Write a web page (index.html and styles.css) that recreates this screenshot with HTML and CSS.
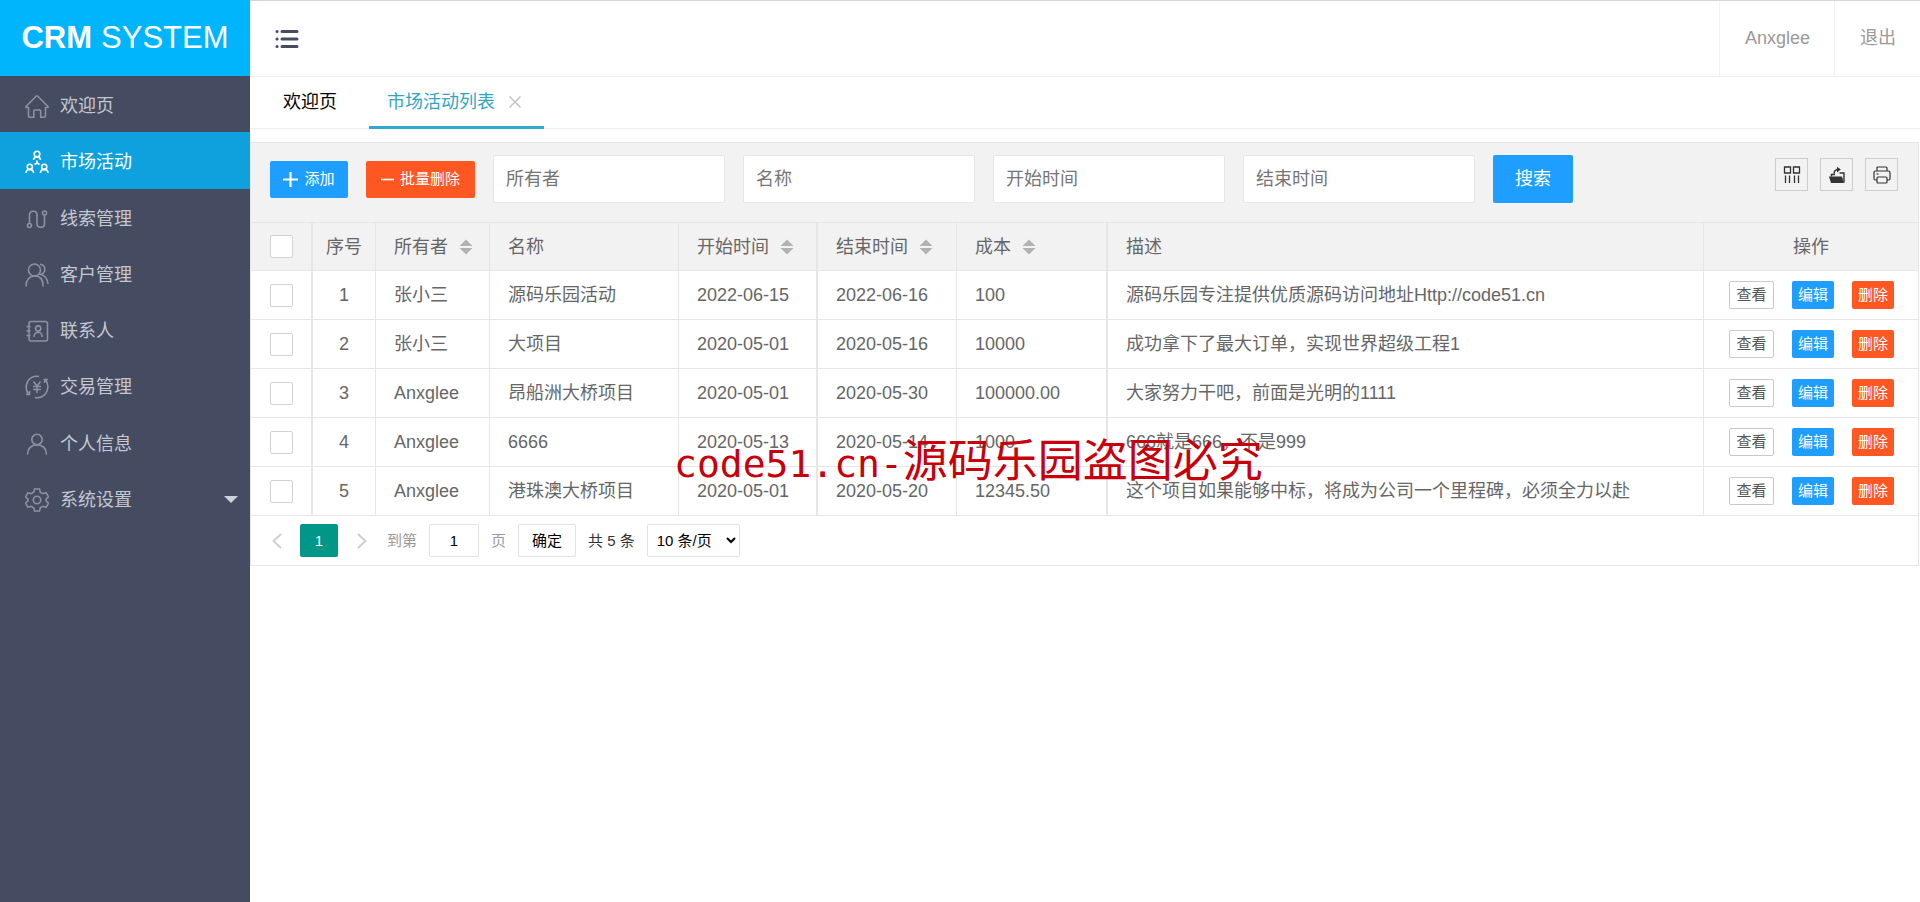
FILE: index.html
```html
<!DOCTYPE html>
<html lang="zh-CN">
<head>
<meta charset="utf-8">
<title>CRM SYSTEM</title>
<link rel="stylesheet" href="styles.css">
</head>
<body>
<svg class="sprite" aria-hidden="true">
  <symbol id="sort" viewBox="0 0 14 16"><path d="M7 .5l6.500 6.500h-13zM7 15.500l6.500-6.500h-13z" fill="#b2b2b2"/></symbol>
</svg>
<div class="app">
  <aside class="sidebar">
    <div class="logo"><b>CRM</b> SYSTEM</div>
    <nav class="menu">
      <a class="menu-item" href="#"><svg class="menu-icon" viewBox="0 0 24 24"><path d="M1 12.500L11.200 2.200q.8-.8 1.600 0L23 12.500v1h-2.500V22q0 1.200-1.200 1.200h-3.600V17q0-1-1-1H9.800q-1 0-1 1v6.200H4.700q-1.200 0-1.200-1.200v-8.500H1z"/></svg>欢迎页</a>
      <a class="menu-item active" href="#"><svg class="menu-icon" viewBox="0 0 24 24"><circle cx="12" cy="4" r="2.800"/><path d="M8.500 10q.3-3 3.500-3.200 3.200.2 3.500 3.200M12 10.500V14M12 13l-2.500 1.500M12 13l2.500 1.500"/><circle cx="4.800" cy="16.800" r="2.600"/><circle cx="19.200" cy="16.800" r="2.600"/><path d="M1 23q.2-3.500 3.800-3.600Q8.400 19.500 8.600 23M15.400 23q.2-3.500 3.800-3.600 3.600.1 3.800 3.600"/></svg>市场活动</a>
      <a class="menu-item" href="#"><svg class="menu-icon" viewBox="0 0 24 24"><circle cx="4.500" cy="18.500" r="2"/><circle cx="19.500" cy="6" r="2"/><path d="M4.500 16.500V8q0-3.800 3.800-3.800T12 8v8.500q0 3.800 3.800 3.800t3.700-3.800V8"/></svg>线索管理</a>
      <a class="menu-item" href="#"><svg class="menu-icon" viewBox="0 0 24 24"><circle cx="9.500" cy="7" r="6"/><path d="M1 23.500Q1 13.500 9.500 13T18 23.500M15 1.300q4.800.4 4.800 5 0 3.700-3.800 5.200 6.500 2 7 9.500"/></svg>客户管理</a>
      <a class="menu-item" href="#"><svg class="menu-icon" viewBox="0 0 24 24"><rect x="4" y="2.500" width="18.500" height="19.500" rx="2"/><path d="M1.500 7.500h4M1.500 12h4M1.500 16.500h4M9 18q.3-4.500 4.200-4.700Q17 13.500 17.300 18"/><circle cx="13.200" cy="9.500" r="2.600"/></svg>联系人</a>
      <a class="menu-item" href="#"><svg class="menu-icon" viewBox="0 0 24 24"><path d="M14 1.500Q7 .2 3 6-.8 12.500 3.200 18.800M1 19.500h3.500V16M10 22.500q7 1.200 11-4.500 3.800-6.500-.2-12.800M23 4.500h-3.500V8M8.500 6.500l3.500 4.500 3.500-4.500M12 11v7M8 11.500h8M8 14.500h8"/></svg>交易管理</a>
      <a class="menu-item" href="#"><svg class="menu-icon" viewBox="0 0 24 24"><circle cx="12" cy="7.500" r="5.200"/><path d="M2.500 22.500q.5-9.500 9.500-9.800 9 .3 9.500 9.800"/></svg>个人信息</a>
      <a class="menu-item" href="#"><svg class="menu-icon" viewBox="0 0 24 24"><circle cx="12" cy="12" r="3.700"/><path d="M9.500 1h5l.8 3.200 2.600 1.500 3.200-1 2.400 4.200-2.400 2.300v1.600l2.400 2.300-2.400 4.200-3.200-1-2.600 1.500-.8 3.200h-5l-.8-3.200-2.600-1.500-3.200 1L.5 15.100l2.400-2.300v-1.600L.5 8.900l2.400-4.200 3.200 1 2.600-1.500z"/></svg>系统设置<span class="caret"></span></a>
    </nav>
  </aside>

  <div class="main">
    <header class="header">
      <button class="toggle" aria-label="菜单"><svg width="24" height="20" viewBox="0 0 24 20"><path d="M7 2.500h15M7 10h15M7 17.500h15" stroke="#454c62" stroke-width="3" stroke-linecap="round"/><path d="M2 2.500h.1M2 10h.1M2 17.500h.1" stroke="#454c62" stroke-width="3" stroke-linecap="round"/></svg></button>
      <div class="user">
        <a href="#">Anxglee</a>
        <a href="#">退出</a>
      </div>
    </header>

    <div class="tabs">
      <a class="tab" href="#">欢迎页</a>
      <a class="tab current" href="#">市场活动列表<svg width="12" height="12" viewBox="0 0 12 12"><path d="M.5.5l11 11M11.500.5l-11 11" stroke="#c2c2c2" stroke-width="1.500"/></svg></a>
    </div>

    <section class="panel">
      <form class="toolbar">
        <button type="button" class="btn blue add"><svg width="15" height="15" viewBox="0 0 15 15"><path d="M7.500 0v15M0 7.500h15" stroke="#fff" stroke-width="2.200"/></svg>添加</button>
        <button type="button" class="btn red batch"><svg width="13" height="15" viewBox="0 0 13 15"><path d="M0 7.500h13" stroke="#fff" stroke-width="1.600"/></svg>批量删除</button>
        <input class="field" type="text" placeholder="所有者" aria-label="所有者">
        <input class="field" type="text" placeholder="名称" aria-label="名称">
        <input class="field" type="text" placeholder="开始时间" aria-label="开始时间">
        <input class="field" type="text" placeholder="结束时间" aria-label="结束时间">
        <button type="button" class="btn blue search">搜索</button>
        <div class="tools">
          <button type="button" class="tool" aria-label="筛选列"><svg width="18" height="18" viewBox="0 0 18 18" fill="none" stroke="#333" stroke-width="1.300"><path d="M1.500 1h6v6h-6zM10.500 1h6v6h-6zM2.500 9.500V17M6.500 9.500V17M11.500 9.500V17M15.500 9.500V17"/></svg></button>
          <button type="button" class="tool" aria-label="导出"><svg width="18" height="18" viewBox="0 0 18 18"><path d="M1 10.500h13l2 6.500H3z" fill="#333"/><path d="M11.500 7H16v9.500M3.500 10.500V8.500H7M6 7.500Q6.500 3.500 10 3.500" fill="none" stroke="#333" stroke-width="1.400"/><path d="M9 .8L12.800 3.600 9 6.400z" fill="#333"/></svg></button>
          <button type="button" class="tool" aria-label="打印"><svg width="18" height="18" viewBox="0 0 18 18" fill="none" stroke="#333" stroke-width="1.200"><path d="M4 5V2q0-1 1-1h8q1 0 1 1v3M4 14H2.200Q1 14 1 12.800V6.500Q1 5 2.500 5h13Q17 5 17 6.500v6.300q0 1.200-1.200 1.200H14"/><rect x="4" y="11" width="10" height="6" rx="1"/><path d="M3.500 8h2"/></svg></button>
        </div>
      </form>

      <table class="grid">
        <colgroup><col class="c-check"><col class="c-no"><col class="c-owner"><col class="c-name"><col class="c-date"><col class="c-date"><col class="c-cost"><col><col class="c-ops"></colgroup>
        <thead>
          <tr>
            <th><input type="checkbox" aria-label="全选"></th>
            <th class="center">序号</th>
            <th>所有者<svg class="sort"><use href="#sort"/></svg></th>
            <th>名称</th>
            <th>开始时间<svg class="sort"><use href="#sort"/></svg></th>
            <th>结束时间<svg class="sort"><use href="#sort"/></svg></th>
            <th>成本<svg class="sort"><use href="#sort"/></svg></th>
            <th>描述</th>
            <th class="center">操作</th>
          </tr>
        </thead>
        <tbody>
          <tr><td><input type="checkbox" aria-label="选择 1"></td><td class="center">1</td><td>张小三</td><td>源码乐园活动</td><td>2022-06-15</td><td>2022-06-16</td><td>100</td><td>源码乐园专注提供优质源码访问地址Http://code51.cn</td><td><div class="ops"><button class="mini view">查看</button><button class="mini blue">编辑</button><button class="mini red">删除</button></div></td></tr>
          <tr><td><input type="checkbox" aria-label="选择 2"></td><td class="center">2</td><td>张小三</td><td>大项目</td><td>2020-05-01</td><td>2020-05-16</td><td>10000</td><td>成功拿下了最大订单，实现世界超级工程1</td><td><div class="ops"><button class="mini view">查看</button><button class="mini blue">编辑</button><button class="mini red">删除</button></div></td></tr>
          <tr><td><input type="checkbox" aria-label="选择 3"></td><td class="center">3</td><td>Anxglee</td><td>昂船洲大桥项目</td><td>2020-05-01</td><td>2020-05-30</td><td>100000.00</td><td>大家努力干吧，前面是光明的1111</td><td><div class="ops"><button class="mini view">查看</button><button class="mini blue">编辑</button><button class="mini red">删除</button></div></td></tr>
          <tr><td><input type="checkbox" aria-label="选择 4"></td><td class="center">4</td><td>Anxglee</td><td>6666</td><td>2020-05-13</td><td>2020-05-14</td><td>1000</td><td>666就是666，不是999</td><td><div class="ops"><button class="mini view">查看</button><button class="mini blue">编辑</button><button class="mini red">删除</button></div></td></tr>
          <tr><td><input type="checkbox" aria-label="选择 5"></td><td class="center">5</td><td>Anxglee</td><td>港珠澳大桥项目</td><td>2020-05-01</td><td>2020-05-20</td><td>12345.50</td><td>这个项目如果能够中标，将成为公司一个里程碑，必须全力以赴</td><td><div class="ops"><button class="mini view">查看</button><button class="mini blue">编辑</button><button class="mini red">删除</button></div></td></tr>
        </tbody>
      </table>

      <div class="pager">
        <button class="arrow" aria-label="上一页"><svg width="10" height="16" viewBox="0 0 10 16"><path d="M9 1L1.500 8 9 15" fill="none" stroke="#ccc" stroke-width="1.800"/></svg></button>
        <button class="page">1</button>
        <button class="arrow" aria-label="下一页"><svg width="10" height="16" viewBox="0 0 10 16"><path d="M1 1l7.500 7L1 15" fill="none" stroke="#ccc" stroke-width="1.800"/></svg></button>
        <label class="jump">到第<input type="text" value="1">页</label>
        <button class="confirm">确定</button>
        <span class="total">共 5 条</span>
        <select class="limit" aria-label="每页条数"><option>10 条/页</option></select>
      </div>
    </section>
    <div class="watermark">code51.cn-<span class="watermark-cjk">源码乐园盗图必究</span></div>
  </div>
</div>
</body>
</html>
```
FILE: styles.css
```css
* { box-sizing: border-box; }

body {
  margin: 0;
  color: #666;
  background: #fff;
  font-family: "Liberation Sans", "Noto Sans CJK SC", sans-serif;
  font-size: 18px;
  line-height: 24px;
}

a { color: inherit; text-decoration: none; }
button, input, select { font: inherit; color: inherit; }
button { padding: 0; border: 0; background: none; cursor: pointer; }
.sprite { display: none; }

.app {
  display: grid;
  grid-template-columns: 250px 1fr;
  min-height: 100vh;
}

/* Sidebar */
.sidebar { background: #454c62; }
.logo {
  display: flex;
  align-items: center;
  justify-content: center;
  gap: 9px;
  height: 76px;
  color: #fff;
  background: #01b5fd;
  font-size: 31px;
}
.menu {
  display: grid;
  grid-auto-rows: 1fr;
  min-height: 450px;
}
.menu-item {
  display: flex;
  align-items: center;
  gap: 11px;
  padding: 4px 12px 0 25px;
  color: #c4c8d2;
}
.menu-item.active { color: #fff; background: #0fa1dd; }
.menu-icon {
  width: 24px;
  height: 24px;
  fill: none;
  stroke: #8b92a2;
  stroke-width: 1.6;
}
.active .menu-icon { stroke: #fff; }
.caret {
  margin-left: auto;
  border: 7px solid transparent;
  border-top-color: #cdd1da;
  border-bottom: 0;
}

/* Header */
.main { position: relative; min-width: 0; }
.header {
  display: flex;
  justify-content: space-between;
  height: 77px;
  border-top: 1px solid #d5d5d5;
  border-bottom: 1px solid #eee;
}
.toggle { display: flex; align-items: center; padding-left: 25px; }
.user { display: flex; color: #999; }
.user a {
  display: flex;
  align-items: center;
  padding: 0 24px 2px 25px;
  border-left: 1px solid #f2f2f2;
}

/* Tabs */
.tabs {
  display: flex;
  height: 52px;
  padding-left: 15px;
  border-bottom: 1px solid #eee;
}
.tab {
  display: flex;
  align-items: center;
  gap: 14px;
  padding: 0 18px 2px;
  color: #000;
}
.tab.current {
  margin: 0 0 -1px 14px;
  padding: 3px 23px 2px 18px;
  border-bottom: 3px solid #30a9cf;
  color: #30a5c5;
}

/* Panel */
.panel {
  margin: 13px 1px 0 0;
  border: 1px solid #e6e6e6;
}
.toolbar {
  display: flex;
  align-items: center;
  gap: 18px;
  padding: 12px 20px 19px 19px;
  background: #f2f2f2;
  border-bottom: 1px solid #e6e6e6;
}
.blue { background: #1e9fff; color: #fff; }
.red { background: #ff5722; color: #fff; }
.btn {
  display: flex;
  align-items: center;
  justify-content: center;
  gap: 6px;
  height: 37px;
  border-radius: 2px;
  font-size: 15px;
}
.add { width: 78px; }
.batch { width: 109px; }
.search { width: 80px; height: 48px; font-size: 18px; }
.field {
  width: 232px;
  height: 48px;
  padding: 0 12px;
  border: 1px solid #e6e6e6;
  border-radius: 2px;
  background: #fff;
}
.field::placeholder { color: #757575; }
.tools {
  display: flex;
  align-self: flex-start;
  gap: 12px;
  margin: 3px 0 0 auto;
}
.tool {
  display: grid;
  place-items: center;
  width: 33px;
  height: 33px;
  border: 1px solid #ccc;
}

/* Table */
.grid {
  width: 100%;
  border-spacing: 0;
  table-layout: fixed;
}
.c-check { width: 62px; }
.c-no { width: 63px; }
.c-owner { width: 114px; }
.c-name { width: 189px; }
.c-date { width: 139px; }
.c-cost { width: 151px; }
.c-ops { width: 214px; }
.grid th, .grid td {
  height: 49px;
  padding: 0 18px;
  border: solid #e6e6e6;
  border-width: 0 1px 1px 0;
  font-weight: inherit;
  text-align: left;
  white-space: nowrap;
}
.grid th { height: 48px; background: #f2f2f2; }
.grid :is(th, td):is(:nth-child(1), :nth-child(5), :nth-child(7)) { border-right-width: 2px; }
.grid :is(th, td):first-child { padding-left: 19px; }
.grid :is(th, td):last-child { border-right: 0; }
.grid .center { padding: 0; text-align: center; }
.grid input {
  display: block;
  appearance: none;
  width: 23px;
  height: 23px;
  margin: 0;
  border: 1px solid #d2d2d2;
  border-radius: 2px;
  background: #fff;
}
.sort { width: 14px; height: 16px; margin-left: 11px; vertical-align: -2px; }
.ops { display: flex; gap: 18px; padding-left: 7px; }
.mini {
  width: 42px;
  height: 28px;
  border-radius: 2px;
  font-size: 15px;
}
.view { width: 45px; border: 1px solid #c9c9c9; background: #fff; color: #555; }

/* Pager */
.pager {
  display: flex;
  align-items: center;
  height: 49px;
  padding-left: 21px;
  gap: 12px;
  color: #333;
  font-size: 15px;
}
.arrow { display: flex; }
.page {
  width: 38px;
  height: 33px;
  margin: 0 7px 0 6px;
  border-radius: 2px;
  color: #fff;
  background: #009688;
}
.jump {
  display: flex;
  align-items: center;
  gap: 12px;
  padding-left: 8px;
  color: #999;
}
.jump input {
  width: 50px;
  height: 33px;
  border: 1px solid #e2e2e2;
  border-radius: 2px;
  color: #000;
  text-align: center;
}
.confirm {
  width: 58px;
  height: 33px;
  border: 1px solid #e2e2e2;
  border-radius: 2px;
  color: #000;
}
.limit {
  width: 93px;
  height: 33px;
  padding: 0 5px;
  border: 1px solid #e2e2e2;
  border-radius: 2px;
  background: #fff;
  color: #000;
}

/* Overlay mark */
.watermark {
  position: absolute;
  top: 428px;
  left: 424px;
  color: #c7000b;
  font-family: "DejaVu Sans Mono", monospace;
  font-size: 38px;
  line-height: 60px;
  white-space: nowrap;
  pointer-events: none;
}
.watermark-cjk {
  font-family: "Noto Sans CJK SC", sans-serif;
  font-size: 45px;
}
```
